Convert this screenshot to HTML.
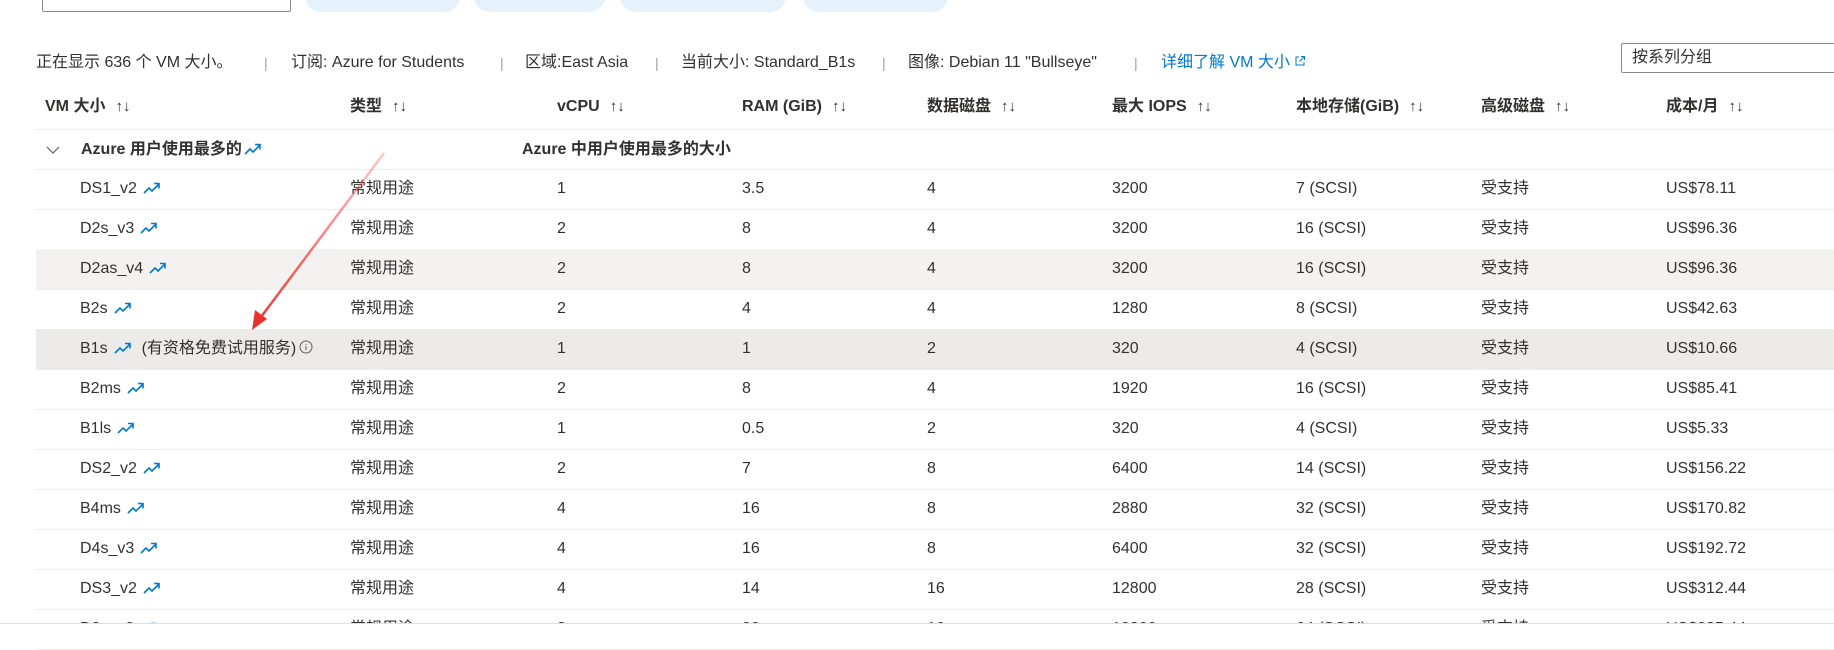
<!DOCTYPE html>
<html><head><meta charset="utf-8"><style>
body{margin:0;width:1834px;height:642px;overflow:hidden;background:#fff;position:relative;font-family:"Liberation Sans","Noto Sans CJK SC",sans-serif;font-size:16px;color:#323130}
.a{position:absolute;white-space:nowrap;line-height:20px}
.line{position:absolute;left:36px;right:0;height:1px;background:#edebe9}
.pill{position:absolute;top:-20px;height:32px;border-radius:16px;background:#e5f1fb}
.h{font-weight:bold;color:#323130;top:97px}
.s{font-weight:normal;margin-left:10px;font-size:15px}
.sep{color:#a19f9d;font-size:14px}
.tr{display:inline-block;vertical-align:-1px;margin-left:6px}
</style></head><body>
<div class="a" style="left:42px;top:-20px;width:247px;height:30px;border:1px solid #8a8886;border-radius:2px"></div>
<div class="pill" style="left:305px;width:155px"></div>
<div class="pill" style="left:474px;width:131px"></div>
<div class="pill" style="left:620px;width:166px"></div>
<div class="pill" style="left:803px;width:145px"></div>

<div class="a" style="left:36px;top:53px">正在显示 636 个 VM 大小。</div>
<div class="a sep" style="left:264px;top:53px">|</div>
<div class="a" style="left:291px;top:53px">订阅: Azure for Students</div>
<div class="a sep" style="left:500px;top:53px">|</div>
<div class="a" style="left:525px;top:53px">区域:East Asia</div>
<div class="a sep" style="left:655px;top:53px">|</div>
<div class="a" style="left:681px;top:53px">当前大小: Standard_B1s</div>
<div class="a sep" style="left:882px;top:53px">|</div>
<div class="a" style="left:908px;top:53px">图像: Debian 11 "Bullseye"</div>
<div class="a sep" style="left:1134px;top:53px">|</div>
<div class="a" style="left:1161px;top:53px;color:#0078d4">详细了解 VM 大小 <svg width="12" height="12" viewBox="0 0 12 12" style="vertical-align:0"><path d="M5 2H2v8h8V7M7 1.5h3.5V5M10.5 1.5L5.5 6.5" fill="none" stroke="#0078d4" stroke-width="1"/></svg></div>
<div class="a" style="left:1621px;top:43px;width:240px;height:28px;border:1px solid #8a8886;border-radius:2px"><span style="position:absolute;left:10px;top:4px">按系列分组</span></div>

<div class="a h" style="left:45px">VM 大小<span class="s">↑↓</span></div>
<div class="a h" style="left:350px">类型<span class="s">↑↓</span></div>
<div class="a h" style="left:557px">vCPU<span class="s">↑↓</span></div>
<div class="a h" style="left:742px">RAM (GiB)<span class="s">↑↓</span></div>
<div class="a h" style="left:927px">数据磁盘<span class="s">↑↓</span></div>
<div class="a h" style="left:1112px">最大 IOPS<span class="s">↑↓</span></div>
<div class="a h" style="left:1296px">本地存储(GiB)<span class="s">↑↓</span></div>
<div class="a h" style="left:1481px">高级磁盘<span class="s">↑↓</span></div>
<div class="a h" style="left:1666px">成本/月<span class="s">↑↓</span></div>
<div class="line" style="top:129px"></div>

<svg class="a" style="left:46px;top:145px" width="14" height="10" viewBox="0 0 14 10"><path d="M1 2l6 6 6-6" fill="none" stroke="#605e5c" stroke-width="1.2"/></svg>
<div class="a" style="left:81px;top:140px;font-weight:bold">Azure 用户使用最多的<svg class="tr" width="18" height="12" viewBox="0 0 18 12" style="margin-left:2px"><path d="M1 11l5-5 3 3 7-7M11 1.5h5v5" fill="none" stroke="#0078d4" stroke-width="1.6"/></svg></div>
<div class="a" style="left:522px;top:140px;font-weight:bold">Azure 中用户使用最多的大小</div>
<div class="line" style="top:169px"></div>

<div id="rows"></div>
<script>
var R=[["DS1_v2","1","3.5","4","3200","7 (SCSI)","US$78.11"],["D2s_v3","2","8","4","3200","16 (SCSI)","US$96.36"],["D2as_v4","2","8","4","3200","16 (SCSI)","US$96.36"],["B2s","2","4","4","1280","8 (SCSI)","US$42.63"],["B1s","1","1","2","320","4 (SCSI)","US$10.66"],["B2ms","2","8","4","1920","16 (SCSI)","US$85.41"],["B1ls","1","0.5","2","320","4 (SCSI)","US$5.33"],["DS2_v2","2","7","8","6400","14 (SCSI)","US$156.22"],["B4ms","4","16","8","2880","32 (SCSI)","US$170.82"],["D4s_v3","4","16","8","6400","32 (SCSI)","US$192.72"],["DS3_v2","4","14","16","12800","28 (SCSI)","US$312.44"],["D8s_v3","8","32","16","12800","64 (SCSI)","US$385.44"]];
var tr='<svg class="tr" width="18" height="12" viewBox="0 0 18 12"><path d="M1 11l5-5 3 3 7-7M11 1.5h5v5" fill="none" stroke="#0078d4" stroke-width="1.6"/></svg>';
var h='',x=[557,742,927,1112,1296,1666];
R.forEach(function(r,i){var t=169+i*40;
if(i==2)h+='<div class="a" style="left:36px;right:0;top:'+t+'px;height:40px;background:#f3f2f1"></div>';
if(i==4)h+='<div class="a" style="left:36px;right:0;top:'+t+'px;height:40px;background:#edebe9"></div>';
var y=t+10;
var nm=r[0]+tr;
if(i==4)nm+='<span style="margin-left:10px">(有资格免费试用服务)</span><svg width="14" height="14" viewBox="0 0 14 14" style="vertical-align:-1px;margin-left:3px"><circle cx="7" cy="7" r="6" fill="none" stroke="#605e5c"/><path d="M7 6v4M7 4v1" stroke="#605e5c"/></svg>';
h+='<div class="a" style="left:80px;top:'+y+'px">'+nm+'</div><div class="a" style="left:350px;top:'+y+'px">常规用途</div>';
for(var k=1;k<6;k++)h+='<div class="a" style="left:'+x[k-1]+'px;top:'+y+'px">'+r[k]+'</div>';
h+='<div class="a" style="left:1481px;top:'+y+'px">受支持</div><div class="a" style="left:1666px;top:'+y+'px">'+r[6]+'</div>';
h+='<div class="line" style="top:'+(t+40)+'px"></div>';});
document.getElementById('rows').innerHTML=h;
</script>
<div class="a" style="left:0;right:0;top:623px;bottom:0;background:#fff;border-top:1px solid #e1dfdd"></div>
<svg class="a" style="left:0;top:0" width="1834" height="642"><defs><linearGradient id="g" x1="384" y1="153" x2="252" y2="329" gradientUnits="userSpaceOnUse"><stop offset="0" stop-color="#f44" stop-opacity=".3"/><stop offset="1" stop-color="#e8312f"/></linearGradient></defs><path d="M384 153L258 321" stroke="url(#g)" stroke-width="2.5"/><path d="M252 330l3-20 12 9z" fill="#e8312f"/></svg>
</body></html>
